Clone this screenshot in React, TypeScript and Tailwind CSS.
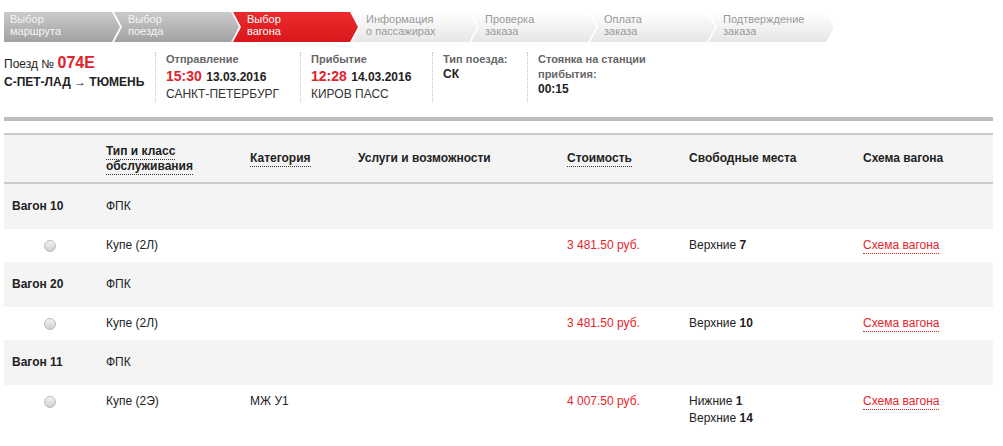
import React from 'react';

type StepState = 'done' | 'active' | 'todo';

interface Step {
  top: string;
  bottom: string;
  state: StepState;
}

const steps: Step[] = [
  { top: 'Выбор', bottom: 'маршрута', state: 'done' },
  { top: 'Выбор', bottom: 'поезда', state: 'done' },
  { top: 'Выбор', bottom: 'вагона', state: 'active' },
  { top: 'Информация', bottom: 'о пассажирах', state: 'todo' },
  { top: 'Проверка', bottom: 'заказа', state: 'todo' },
  { top: 'Оплата', bottom: 'заказа', state: 'todo' },
  { top: 'Подтверждение', bottom: 'заказа', state: 'todo' },
];

const stateClass: Record<StepState, string> = {
  done: 'bg-linear-to-b from-[#cacaca] to-[#a2a2a2] text-[#f4f4f4]',
  active: 'bg-linear-to-b from-[#ea2a2c] to-[#d9171b] text-white',
  todo: 'bg-linear-to-b from-white to-[#e6e6e6] text-[#9a9a9a]',
};

interface Wagon {
  num: string;
  carrier: string;
  type: string;
  category: string;
  price: string;
  seats: [string, string][];
}

const wagons: Wagon[] = [
  { num: 'Вагон 10', carrier: 'ФПК', type: 'Купе (2Л)', category: '', price: '3 481.50 руб.', seats: [['Верхние', '7']] },
  { num: 'Вагон 20', carrier: 'ФПК', type: 'Купе (2Л)', category: '', price: '3 481.50 руб.', seats: [['Верхние', '10']] },
  {
    num: 'Вагон 11',
    carrier: 'ФПК',
    type: 'Купе (2Э)',
    category: 'МЖ У1',
    price: '4 007.50 руб.',
    seats: [
      ['Нижние', '1'],
      ['Верхние', '14'],
    ],
  },
];

const cols = 'grid grid-cols-[94px_144px_108px_209px_122px_174px_1fr]';

const Dotted: React.FC<{ children: React.ReactNode }> = ({ children }) => (
  <span className="border-b border-dotted border-[#333] pb-[1px]">{children}</span>
);

const StepsBar: React.FC = () => (
  <div className="flex h-[30px]">
    {steps.map((s, i) => (
      <div
        key={i}
        className={`h-[30px] pt-[1px] text-[11px] leading-[12px] ${stateClass[s.state]} ${
          i === 0
            ? 'w-[116px] pl-[6px] [clip-path:polygon(0_0,calc(100%_-_8px)_0,100%_50%,calc(100%_-_8px)_100%,0_100%)]'
            : 'w-[125px] -ml-[6px] pl-[14px] [clip-path:polygon(0_0,calc(100%_-_8px)_0,100%_50%,calc(100%_-_8px)_100%,0_100%,8px_50%)]'
        }`}
      >
        <div>{s.top}</div>
        <div>{s.bottom}</div>
      </div>
    ))}
  </div>
);

const TrainInfo: React.FC = () => (
  <div className="flex mt-[10px] h-[50px] text-[#222]">
    <div className="w-[151px] pt-[1px]">
      <div className="text-[12px] leading-[20px]">
        Поезд № <span className="text-[16px] font-bold text-[#e3232a]">074E</span>
      </div>
      <div className="text-[12px] leading-[16px] font-bold">С-ПЕТ-ЛАД → ТЮМЕНЬ</div>
    </div>

    <div className="w-[145px] border-l border-dotted border-[#c4c4c4] pl-[10px]">
      <div className="text-[11px] leading-[15px] font-bold text-[#666]">Отправление</div>
      <div className="leading-[17px] font-bold">
        <span className="text-[14px] text-[#e3232a]">15:30</span> <span className="text-[12px]">13.03.2016</span>
      </div>
      <div className="text-[12px] leading-[17px] text-[#333]">САНКТ-ПЕТЕРБУРГ</div>
    </div>

    <div className="w-[132px] border-l border-dotted border-[#c4c4c4] pl-[10px]">
      <div className="text-[11px] leading-[15px] font-bold text-[#666]">Прибытие</div>
      <div className="leading-[17px] font-bold">
        <span className="text-[14px] text-[#e3232a]">12:28</span> <span className="text-[12px]">14.03.2016</span>
      </div>
      <div className="text-[12px] leading-[17px] text-[#333]">КИРОВ ПАСС</div>
    </div>

    <div className="w-[95px] border-l border-dotted border-[#c4c4c4] pl-[10px]">
      <div className="text-[11px] leading-[15px] font-bold text-[#666]">Тип поезда:</div>
      <div className="text-[12px] leading-[15px] font-bold">СК</div>
    </div>

    <div className="w-[130px] border-l border-dotted border-[#c4c4c4] pl-[10px]">
      <div className="text-[11px] leading-[15px] font-bold text-[#666]">Стоянка на станции прибытия:</div>
      <div className="text-[12px] leading-[15px] font-bold">00:15</div>
    </div>
  </div>
);

const Radio: React.FC = () => (
  <div className="flex items-center h-[15px] ml-[32px]">
    <div className="w-[12px] h-[12px] rounded-full border border-[#bcbcbc] bg-linear-to-b from-[#f3f3f3] to-[#d0d0d0]" />
  </div>
);

const WagonTable: React.FC = () => (
  <div className="mt-[12px] text-[12px] text-[#222]">
    <div className={`${cols} h-[51px] items-center bg-[#f4f4f4] border-y-2 border-[#cccccc] font-bold leading-[15px]`}>
      <div className="pl-[8px]" />
      <div className="pl-[8px]">
        <Dotted>Тип и класс</Dotted>
        <br />
        <Dotted>обслуживания</Dotted>
      </div>
      <div className="pl-[8px]">
        <Dotted>Категория</Dotted>
      </div>
      <div className="pl-[8px]">Услуги и возможности</div>
      <div className="pl-[8px]">
        <Dotted>Стоимость</Dotted>
      </div>
      <div className="pl-[8px]">Свободные места</div>
      <div className="pl-[8px]">Схема вагона</div>
    </div>

    {wagons.map((w) => (
      <React.Fragment key={w.num}>
        <div className={`${cols} h-[45px] items-center bg-[#f4f4f4] leading-[15px]`}>
          <div className="pl-[8px] font-bold">{w.num}</div>
          <div className="pl-[8px]">{w.carrier}</div>
        </div>
        <div className={`${cols} py-[9px] leading-[15px] bg-white`}>
          <div className="pl-[8px]">
            <Radio />
          </div>
          <div className="pl-[8px]">{w.type}</div>
          <div className="pl-[8px]">{w.category}</div>
          <div className="pl-[8px]" />
          <div className="pl-[8px] text-[#e5262d]">{w.price}</div>
          <div className="pl-[8px] flex flex-col gap-[2px]">
            {w.seats.map(([label, n]) => (
              <div key={label}>
                {label} <span className="font-bold">{n}</span>
              </div>
            ))}
          </div>
          <div className="pl-[8px]">
            <span className="text-[#e5262d] border-b border-dotted border-[#e5262d] pb-[1px]">Схема вагона</span>
          </div>
        </div>
      </React.Fragment>
    ))}
  </div>
);

export default function App() {
  return (
    <div className="w-[1003px] min-h-[446px] bg-white font-['Liberation_Sans',Arial,sans-serif] px-[4px] pt-[12px]">
      <div className="w-[989px]">
        <StepsBar />
        <TrainInfo />
        <div className="mt-[15px] h-[4px] bg-[#bdbdbd]" />
        <WagonTable />
      </div>
    </div>
  );
}
